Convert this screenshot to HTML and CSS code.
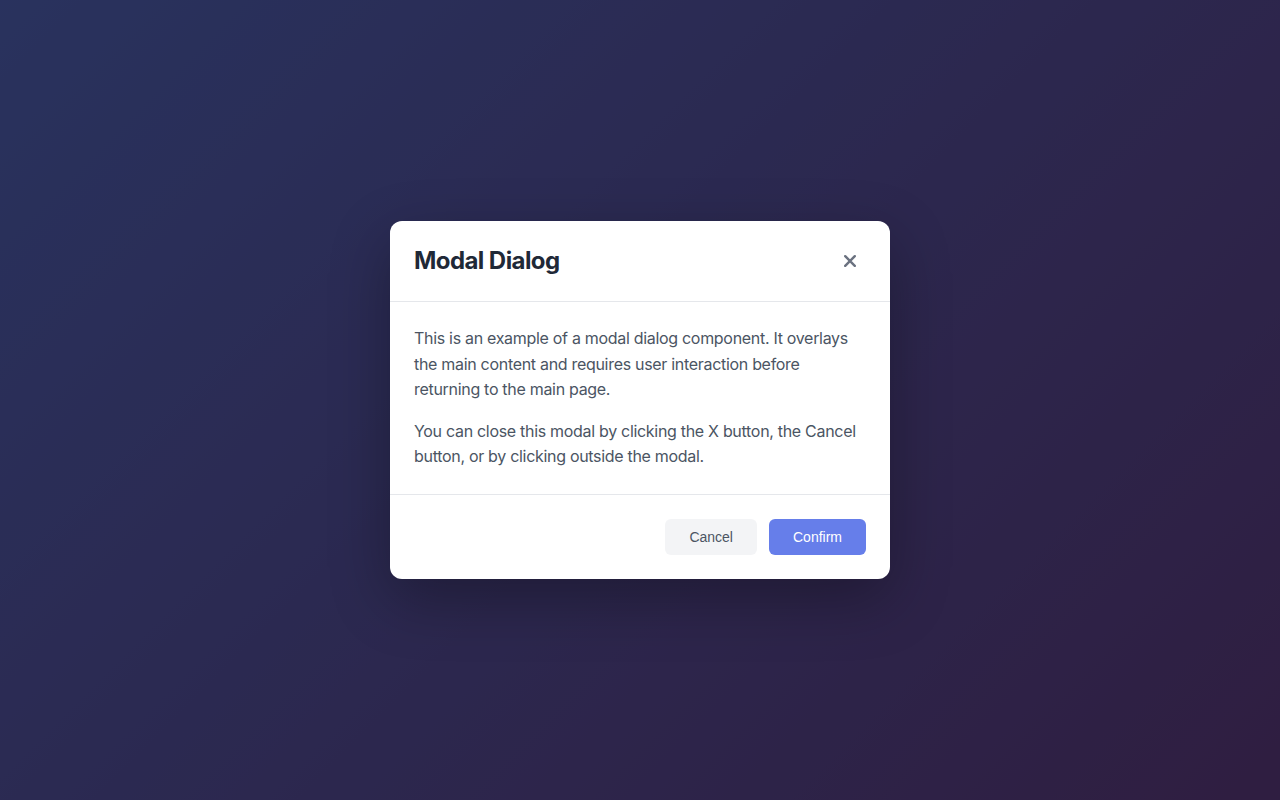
FILE: index.html
```html
<!DOCTYPE html>
<html lang="en">
<head>
<meta charset="utf-8">
<title>Modal Dialog</title>
<link rel="stylesheet" href="styles.css">
</head>
<body>
<div class="backdrop">
  <div class="overlay">
    <div class="modal" role="dialog" aria-labelledby="modal-title">
      <div class="modal-header">
        <h2 id="modal-title" class="modal-title">Modal Dialog</h2>
        <button class="close-btn" aria-label="Close">
          <svg width="12" height="12" viewBox="0 0 12 12" aria-hidden="true"><path d="M1.2 1.2 L10.8 10.8 M10.8 1.2 L1.2 10.8" stroke="#6b7280" stroke-width="2.4" stroke-linecap="round" fill="none"/></svg>
        </button>
      </div>
      <div class="modal-body">
        <p>This is an example of a modal dialog component. It overlays the main content and requires user interaction before returning to the main page.</p>
        <p>You can close this modal by clicking the X button, the Cancel button, or by clicking outside the modal.</p>
      </div>
      <div class="modal-footer">
        <button class="btn btn-secondary">Cancel</button>
        <button class="btn btn-primary">Confirm</button>
      </div>
    </div>
  </div>
</div>
</body>
</html>
```
FILE: styles.css
```css
html, body {
  margin: 0;
  padding: 0;
  height: 100%;
}
body {
  font-family: Inter, "Liberation Sans", sans-serif;
}
.backdrop {
  height: 100%;
  background: linear-gradient(135deg, #667eea 0%, #764ba2 100%);
}
.overlay {
  height: 100%;
  background: rgba(0, 0, 0, 0.6);
  display: flex;
  align-items: center;
  justify-content: center;
}
.modal {
  width: 500px;
  background: #ffffff;
  border-radius: 12px;
  box-shadow: 0 20px 60px rgba(0, 0, 0, 0.3);
  overflow: hidden;
}
.modal-header {
  display: flex;
  align-items: center;
  justify-content: space-between;
  padding: 24px;
  border-bottom: 1px solid #e5e7eb;
}
.modal-title {
  margin: 0;
  font-size: 24px;
  line-height: 32px;
  font-weight: 700;
  letter-spacing: -0.024em;
  color: #1f2937;
}
.close-btn {
  width: 32px;
  height: 32px;
  border: none;
  background: transparent;
  padding: 0;
  display: flex;
  align-items: center;
  justify-content: center;
  cursor: pointer;
  border-radius: 6px;
}
.modal-body {
  padding: 24px;
  color: #4b5563;
  font-size: 16px;
  line-height: 1.6;
  letter-spacing: -0.019em;
}
.modal-body p {
  margin: 0 0 16px;
}
.modal-body p:last-child {
  margin-bottom: 0;
}
.modal-footer {
  display: flex;
  justify-content: flex-end;
  gap: 12px;
  padding: 24px;
  border-top: 1px solid #e5e7eb;
}
.btn {
  font-family: "Liberation Sans", Arial, sans-serif;
  font-size: 14px;
  line-height: 20px;
  padding: 8px 24px;
  border: none;
  border-radius: 6px;
  cursor: pointer;
}
.btn-secondary {
  background: #f3f4f6;
  color: #4b5563;
}
.btn-primary {
  background: #667eea;
  color: #ffffff;
}
```
